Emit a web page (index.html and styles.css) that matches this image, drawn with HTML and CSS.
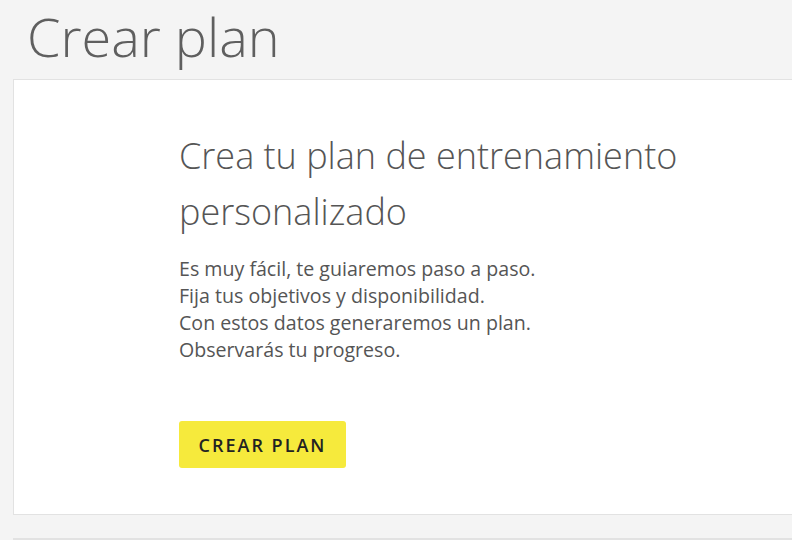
FILE: index.html
```html
<!DOCTYPE html>
<html lang="es">
<head>
<meta charset="utf-8">
<title>Crear plan</title>
<link rel="stylesheet" href="styles.css">
</head>
<body>
<main class="page">
  <h1 class="page-title">Crear plan</h1>
  <section class="card">
    <div class="card-body">
      <h2 class="card-title">Crea tu plan de entrenamiento personalizado</h2>
      <p class="card-text">Es muy fácil, te guiaremos paso a paso.<br>Fija tus objetivos y disponibilidad.<br>Con estos datos generaremos un plan.<br>Observarás tu progreso.</p>
      <button class="btn" type="button">CREAR PLAN</button>
    </div>
  </section>
  <section class="card card-next"></section>
</main>
</body>
</html>
```
FILE: styles.css
```css
html, body {
  margin: 0;
  padding: 0;
  background: #f4f4f4;
  font-family: "Open Sans", "Liberation Sans", sans-serif;
  overflow: hidden;
  height: 540px;
}
.page {
  padding-left: 13px;
}
.page-title {
  margin: 0;
  padding: 0 0 0 14px;
  height: 79px;
  font-weight: 300;
  font-size: 54px;
  line-height: 72px;
  color: #5f5f5f;
}
.card {
  background: #fff;
  border: 1px solid #e2e2e2;
  border-right: none;
  box-sizing: border-box;
  height: 436px;
}
.card-body {
  padding: 48px 0 0 165px;
}
.card-title {
  margin: 0;
  font-weight: 300;
  font-size: 36px;
  line-height: 56px;
  color: #555;
  max-width: 540px;
}
.card-text {
  margin: 15px 0 0;
  font-size: 19.6px;
  line-height: 27px;
  color: #555;
}
.btn {
  margin-top: 58px;
  width: 167px;
  height: 47px;
  border: none;
  border-radius: 3px;
  background: #f6ea3c;
  color: #222;
  font-family: "Open Sans", "Liberation Sans", sans-serif;
  font-weight: 600;
  font-size: 18px;
  letter-spacing: 2px;
  padding: 0;
}
.card-next {
  margin-top: 23px;
  height: 2px;
}
```
